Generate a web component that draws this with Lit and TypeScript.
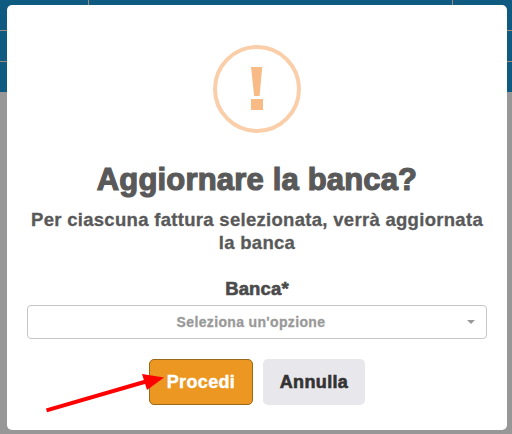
import { LitElement, html, css } from "lit";
import { customElement } from "lit/decorators.js";

@customElement("app-root")
export class AppRoot extends LitElement {
  static styles = css`
    :host {
      display: block;
      position: relative;
      width: 512px;
      height: 434px;
      overflow: hidden;
      background: #979797;
      font-family: "Liberation Sans", Arial, sans-serif;
      font-weight: 700;
      color: #595959;
    }
    * { box-sizing: border-box; }
    .backdrop {
      position: absolute;
      inset: 0;
      display: grid;
      grid-template-columns: 88px 363px 1fr;
      grid-template-rows: 30px 30px 30px;
      gap: 1px;
      height: 92px;
      background: #9b8c82;
    }
    .cell { background: #0f5a80; }
    .modal {
      position: relative;
      display: flex;
      flex-direction: column;
      align-items: center;
      width: 500px;
      height: 425px;
      margin: 5px 0 0 7px;
      padding: 40px 20px 0;
      border-radius: 5px;
      background: #fff;
    }
    .icon { display: block; width: 88px; height: 88px; }
    .title {
      margin: 28px 0 0;
      font-size: 31px;
      line-height: 38px;
      letter-spacing: 0.17px;
      -webkit-text-stroke: 1.2px currentColor;
      white-space: nowrap;
    }
    .message {
      margin: 9px 0 0;
      font-size: 18.5px;
      line-height: 23px;
      letter-spacing: 0.3px;
      text-align: center;
      white-space: nowrap;
      -webkit-text-stroke: 0.3px currentColor;
    }
    .label {
      margin-top: 23px;
      font-size: 18.5px;
      line-height: 23px;
      letter-spacing: 0.15px;
      color: #4a4a4a;
      -webkit-text-stroke: 0.6px currentColor;
    }
    .select {
      display: flex;
      align-items: center;
      width: 460px;
      height: 34px;
      margin-top: 5px;
      padding: 0 11px 0 7px;
      border: 1px solid #c6c6c6;
      border-radius: 4px;
      font-size: 14px;
      letter-spacing: 0.35px;
      color: #999;
      -webkit-text-stroke: 0.3px currentColor;
    }
    .value { flex: 1; text-align: center; }
    .caret {
      border: 4px solid transparent;
      border-top-color: #999;
      border-bottom: 0;
    }
    .actions { display: flex; gap: 10px; margin-top: 20px; }
    .button {
      height: 46px;
      padding: 0;
      border: 0;
      border-radius: 5px;
      font: inherit;
      font-size: 18px;
      letter-spacing: 0.35px;
      -webkit-text-stroke: 0.4px currentColor;
    }
    .confirm {
      width: 104px;
      border: 1px solid #98691a;
      background: #eb9721;
      color: #fff;
    }
    .cancel {
      width: 102px;
      background: #e8e7ec;
      color: #333;
      -webkit-text-stroke-width: 0.6px;
    }
    .arrow { position: absolute; left: 0; top: 0; }
  `;

  render() {
    return html`
      <div class="backdrop">
        ${Array.from({ length: 9 }, () => html`<div class="cell"></div>`)}
      </div>
      <div class="modal">
        <svg class="icon" viewBox="0 0 88 88">
          <circle cx="44" cy="44" r="42" fill="none" stroke="#facea8" stroke-width="4" />
          <path d="M38 22h11.2l-2.6 29h-5.4zM38 54h12v11H38z" fill="#f8bb86" />
        </svg>
        <h2 class="title">Aggiornare la banca?</h2>
        <p class="message">Per ciascuna fattura selezionata, verrà aggiornata<br />la banca</p>
        <div class="label">Banca*</div>
        <div class="select">
          <span class="value">Seleziona un'opzione</span><span class="caret"></span>
        </div>
        <div class="actions">
          <button class="button confirm">Procedi</button>
          <button class="button cancel">Annulla</button>
        </div>
      </div>
      <svg class="arrow" width="512" height="434" viewBox="0 0 512 434">
        <path d="M46.5 410.3L146 381.5" stroke="#f00" stroke-width="4" />
        <path d="M142 374L164 377.5L147 390z" fill="#f00" />
      </svg>
    `;
  }
}
